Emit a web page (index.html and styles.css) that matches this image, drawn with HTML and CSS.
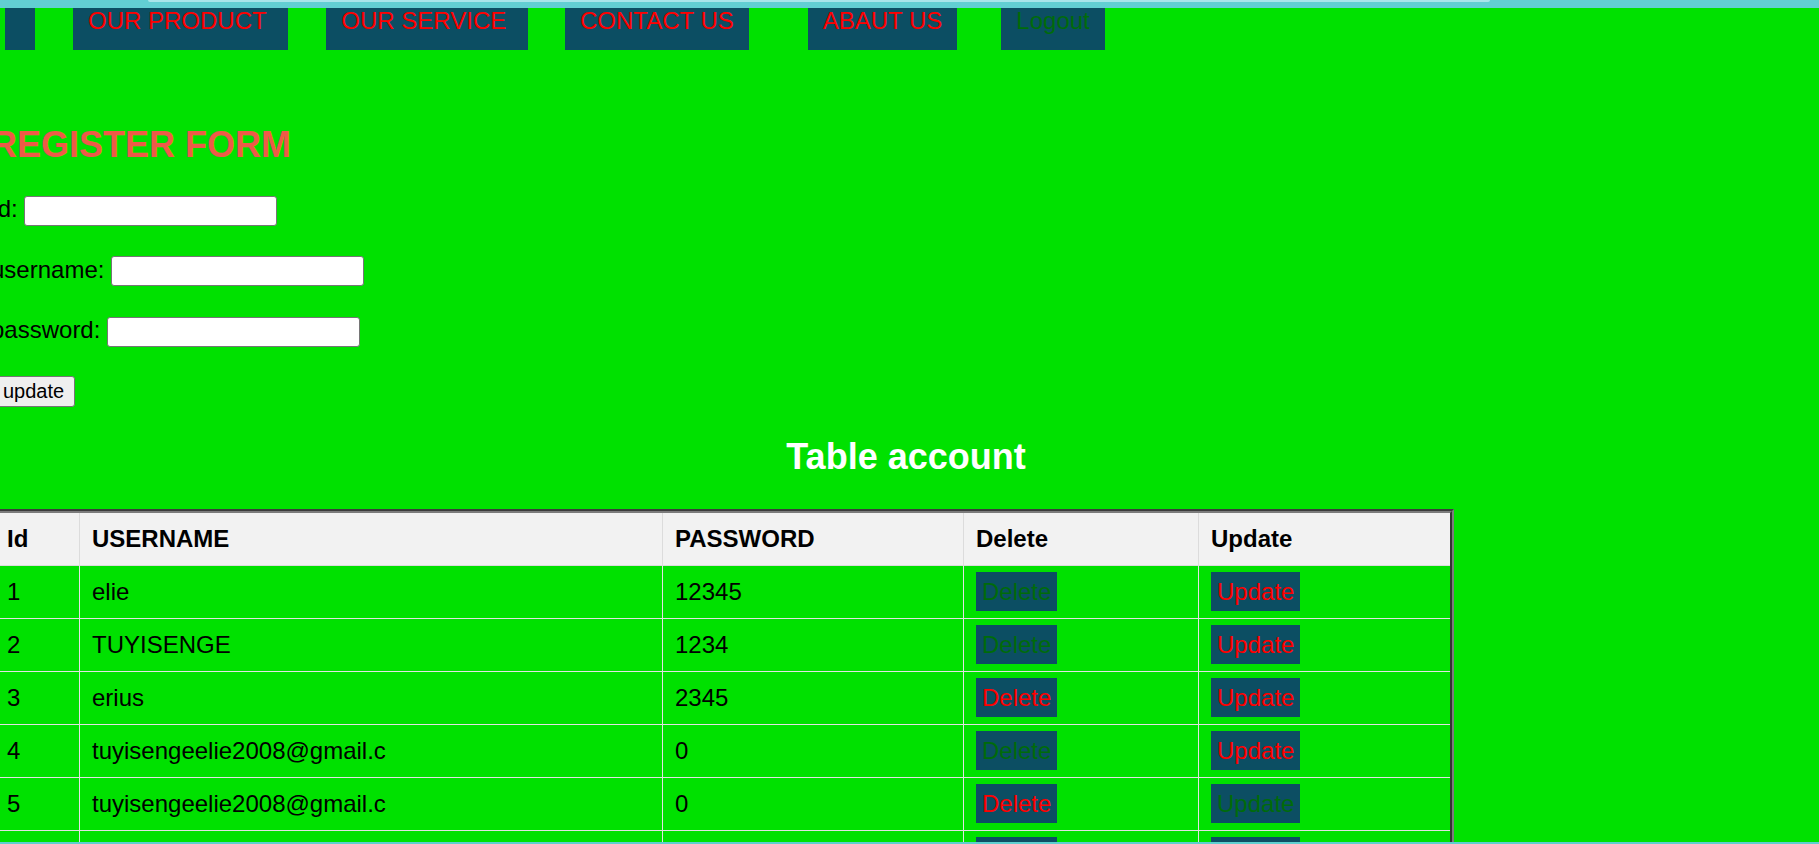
FILE: index.html
```html
<!DOCTYPE html>
<html lang="en">
<head>
<meta charset="utf-8">
<title>Register form</title>
<link rel="stylesheet" href="styles.css">
</head>
<body>
<div class="screen">
  <div class="topbar"><div class="topbar-thumb"></div></div>
  <div class="page">
    <nav class="nav">
      <a class="nav-item nav-item--stub" href="#"></a>
      <a class="nav-item" href="#">OUR PRODUCT&nbsp;</a>
      <a class="nav-item" href="#">OUR SERVICE&nbsp;</a>
      <a class="nav-item nav-item--contact" href="#">CONTACT US</a>
      <a class="nav-item nav-item--about" href="#">ABAUT US</a>
      <a class="nav-item nav-item--logout" href="#">Logout</a>
    </nav>
    <main class="content">
      <h2 class="form-title">REGISTER FORM</h2>
      <form class="form">
        <div class="field"><label class="field-label">Id:</label><input class="field-input" type="text"></div>
        <div class="field"><label class="field-label">username:</label><input class="field-input" type="text"></div>
        <div class="field"><label class="field-label">password:</label><input class="field-input" type="text"></div>
        <button class="submit" type="button">update</button>
      </form>
      <h2 class="table-title">Table account</h2>
      <div class="table-frame">
        <table class="accounts">
          <colgroup>
            <col class="col-id">
            <col class="col-user">
            <col class="col-pass">
            <col class="col-del">
            <col class="col-upd">
          </colgroup>
          <thead>
            <tr><th>Id</th><th>USERNAME</th><th>PASSWORD</th><th>Delete</th><th>Update</th></tr>
          </thead>
          <tbody>
            <tr><td>1</td><td>elie</td><td>12345</td><td><a class="btn btn--green" href="#">Delete</a></td><td><a class="btn btn--red" href="#">Update</a></td></tr>
            <tr><td>2</td><td>TUYISENGE</td><td>1234</td><td><a class="btn btn--green" href="#">Delete</a></td><td><a class="btn btn--red" href="#">Update</a></td></tr>
            <tr><td>3</td><td>erius</td><td>2345</td><td><a class="btn btn--red" href="#">Delete</a></td><td><a class="btn btn--red" href="#">Update</a></td></tr>
            <tr><td>4</td><td>tuyisengeelie2008@gmail.c</td><td>0</td><td><a class="btn btn--green" href="#">Delete</a></td><td><a class="btn btn--red" href="#">Update</a></td></tr>
            <tr><td>5</td><td>tuyisengeelie2008@gmail.c</td><td>0</td><td><a class="btn btn--red" href="#">Delete</a></td><td><a class="btn btn--green" href="#">Update</a></td></tr>
            <tr><td>6</td><td>elie</td><td>0</td><td><a class="btn btn--green" href="#">Delete</a></td><td><a class="btn btn--red" href="#">Update</a></td></tr>
          </tbody>
        </table>
      </div>
    </main>
  </div>
  <div class="bottombar"></div>
</div>
</body>
</html>
```

FILE: styles.css
```css
html, body {
  margin: 0;
  padding: 0;
}

body {
  width: 1819px;
  height: 844px;
  overflow: hidden;
  font-family: "Liberation Sans", Arial, sans-serif;
  font-size: 24px;
  color: #000;
}

.screen {
  display: flex;
  flex-direction: column;
  height: 844px;
}

.topbar {
  height: 8px;
  flex: none;
  background: #62cfd3;
  position: relative;
  z-index: 2;
}

.topbar-thumb {
  margin-left: 148px;
  width: 1342px;
  height: 2px;
  background: #a9e5ea;
  border-radius: 0 0 6px 6px;
}

.page {
  height: 834px;
  flex: none;
  overflow: hidden;
  background: #00e100;
}

.bottombar {
  height: 2px;
  flex: none;
  background: #5ecfd0;
}

/* navigation */
.nav {
  display: flex;
  gap: 38px;
  padding-left: 5px;
  margin-top: -4px;
}

.nav-item {
  display: block;
  background: #0c4e63;
  color: #ff0000;
  text-decoration: none;
  font-size: 24px;
  line-height: 27.6px;
  height: 46px;
  box-sizing: border-box;
  padding: 3px 15px 0;
  white-space: nowrap;
}

.nav-item--stub {
  width: 30px;
  padding: 0;
}

.nav-item--contact {
  margin-left: -1px;
}

.nav-item--about {
  margin-left: 21px;
}

.nav-item--logout {
  margin-left: 6px;
  color: #006b0a;
}

/* content */
.content {
  margin-left: -9px;
}

.form-title {
  margin: 74px 0 0;
  font-size: 36px;
  line-height: 41px;
  font-weight: bold;
  color: #ee5a47;
  white-space: nowrap;
}

.form {
  margin: 30px 0 0;
}

.field {
  display: flex;
  align-items: baseline;
  gap: 6.7px;
  margin-bottom: 30px;
}

.field-label {
  font-size: 24px;
  line-height: 27.6px;
}

.field-input {
  width: 253px;
  height: 30px;
  box-sizing: border-box;
  margin: 0;
  padding: 1px 3px;
  font-family: "Liberation Sans", Arial, sans-serif;
  font-size: 20px;
  border: 1px solid #767676;
  border-radius: 3px;
  background: #fff;
}

.submit {
  display: block;
  margin: -1px 0 0;
  height: 31px;
  box-sizing: border-box;
  padding: 0 10px 0 11px;
  font-family: "Liberation Sans", Arial, sans-serif;
  font-size: 20px;
  line-height: 23px;
  color: #000;
  background: #efefef;
  border: 1px solid #767676;
  border-radius: 3px;
}

.table-title {
  width: 1830px;
  margin: 29px 0 0;
  font-size: 36px;
  line-height: 41px;
  font-weight: bold;
  color: #fff;
  text-align: center;
}

.table-frame {
  width: fit-content;
  margin-top: 32px;
  border-style: solid;
  border-width: 2px;
  border-color: #3c3c3c #7c7c7c #7c7c7c #3c3c3c;
}

.accounts {
  table-layout: fixed;
  width: 1459px;
  border-collapse: separate;
  border-spacing: 0;
  border-style: solid;
  border-width: 2px;
  border-color: #7c7c7c #343434 #343434 #7c7c7c;
}

.col-id { width: 85px; }
.col-user { width: 583px; }
.col-pass { width: 301px; }
.col-del { width: 235px; }
.col-upd { width: 251px; }

.accounts th,
.accounts td {
  padding: 12px;
  line-height: 28px;
  font-size: 24px;
  text-align: left;
  white-space: nowrap;
  overflow: visible;
  border-right: 1px solid #e2e2e2;
  border-bottom: 1px solid #e2e2e2;
}

.accounts th:last-child,
.accounts td:last-child {
  border-right: none;
}

.accounts th {
  background: #f2f2f2;
  font-weight: bold;
  border-color: #dcdcdc;
}

.btn {
  padding: 6px;
  background: #0c4e63;
  text-decoration: none;
}

.btn--green {
  color: #006b0a;
}

.btn--red {
  color: #ff0000;
}
```
